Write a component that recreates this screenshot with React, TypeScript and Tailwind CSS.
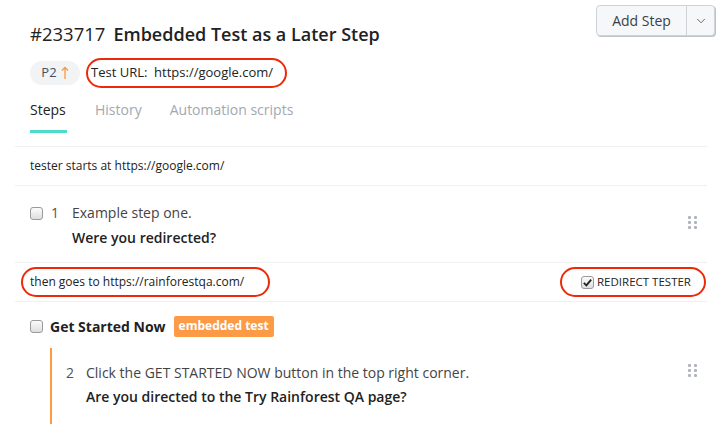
import React from 'react';
import { ChevronDown } from 'lucide-react';

const DragHandle: React.FC = () => (
  <div className="grid grid-cols-2 gap-x-[3px] gap-y-[2px]">
    {[0, 1, 2, 3, 4, 5].map(i => (
      <span key={i} className="w-[3px] h-[3px] bg-[#b0b4bd] rounded-[1px]" />
    ))}
  </div>
);

const Box: React.FC<{ checked?: boolean }> = ({ checked }) => (
  <span className="w-[13px] h-[13px] rounded-[3px] border border-[#9a9a9a] bg-gradient-to-b from-[#fbfbfb] to-[#dedede] flex items-center justify-center shrink-0">
    {checked && (
      <svg viewBox="0 0 12 12" className="w-[11px] h-[11px]">
        <path d="M2 6.5 L4.8 9.2 L10 2.8" stroke="#222" strokeWidth="2" fill="none" />
      </svg>
    )}
  </span>
);

export default function App() {
  return (
    <div className="w-[722px] h-[427px] bg-white relative overflow-hidden text-[#333] font-['Open_Sans',sans-serif]">
      {/* Add step */}
      <div className="absolute top-[5px] left-[596px] flex h-[31px] rounded-[4px] border border-[#cfd3d9] bg-[#f6f7f9] shadow-[1px_1px_0_#bfc3c9]">
        <div className="w-[89px] flex items-center justify-center text-[14px] text-[#3b3f47]">Add Step</div>
        <div className="w-[28px] border-l border-[#cfd3d9] flex items-center justify-center text-[#555]">
          <ChevronDown className="w-[14px] h-[14px]" strokeWidth={1.5} />
        </div>
      </div>

      <div className="pl-[30px] pt-[20px]">
        <h1 className="text-[18px] leading-[28px] text-[#222]">
          <span className="font-normal text-[18.5px]">#233717</span>
          <span className="font-semibold ml-[8px]">Embedded Test as a Later Step</span>
        </h1>
        <div className="flex items-center mt-[10px] h-[30px]">
          <span className="h-[24px] w-[50px] rounded-full bg-[#f2f3f5] flex items-center justify-center text-[13px] text-[#4a4f5a] gap-[4px]">
            P2
            <svg viewBox="0 0 8 14" className="w-[8px] h-[14px]">
              <path d="M4 13 V1.5 M1 4.5 L4 1.5 L7 4.5" stroke="#f79a3e" strokeWidth="1.3" fill="none" />
            </svg>
          </span>
          <span className="ml-[6px] h-[30px] w-[201px] border-2 border-[#ec2a0a] rounded-full flex items-center pl-[3px] text-[13px] text-[#222]">
            Test URL:&nbsp;&nbsp;https://google.com/
          </span>
        </div>
        <div className="flex mt-[10px] text-[14px] h-[37px]">
          <div className="flex flex-col">
            <span className="text-[#222] leading-[24px]">Steps</span>
            <span className="mt-[8px] h-[3px] w-[37px] bg-[#4fdacb]" />
          </div>
          <span className="ml-[28px] text-[#a3a7b1] leading-[24px]">History</span>
          <span className="ml-[28px] text-[#a3a7b1] leading-[24px]">Automation scripts</span>
        </div>
      </div>

      <div className="ml-[15px] mr-[15px] mt-[11px] border-t border-[#eef0f2]">
        <div className="h-[38px] flex items-center pl-[15px] text-[12px] text-[#222]">tester starts at https://google.com/</div>
        <div className="border-t border-[#eef0f2] h-[77px] flex items-start pl-[15px] pt-[17px]">
          <div className="mt-[4px]"><Box /></div>
          <span className="ml-[8px] text-[14px] text-[#555] leading-[20px]">1</span>
          <div className="ml-[13px]">
            <div className="text-[14px] text-[#444] leading-[20px]">Example step one.</div>
            <div className="text-[14px] text-[#222] font-semibold leading-[20px] mt-[5px]">Were you redirected?</div>
          </div>
          <div className="ml-auto mr-[10px] mt-[13px]"><DragHandle /></div>
        </div>
        <div className="border-t border-[#eef0f2] h-[39px] flex items-center">
          <span className="ml-[6px] h-[30px] w-[249px] border-2 border-[#ec2a0a] rounded-full flex items-center pl-[7px] text-[12px] text-[#222]">
            then goes to https://rainforestqa.com/
          </span>
          <span className="ml-auto mr-[1px] h-[30px] w-[146px] border-2 border-[#ec2a0a] rounded-full flex items-center pl-[19px] text-[11.5px] text-[#222] gap-[3px]">
            <Box checked /> REDIRECT TESTER
          </span>
        </div>
        <div className="border-t border-[#eef0f2] pl-[15px] pt-[13px]">
          <div className="flex items-center h-[22px]">
            <Box />
            <span className="ml-[7px] text-[14px] font-bold text-[#222]">Get Started Now</span>
            <span className="ml-[8px] h-[21px] px-[5px] rounded-[2px] bg-[#fd9a45] text-white font-bold text-[12px] flex items-center">embedded test</span>
          </div>
          <div className="ml-[20px] mt-[11px] border-l-2 border-[#fd9a45] h-[76px] flex items-start pt-[15px]">
            <span className="ml-[14px] text-[14px] text-[#555] leading-[20px]">2</span>
            <div className="ml-[12px]">
              <div className="text-[14px] text-[#444] leading-[20px]">Click the GET STARTED NOW button in the top right corner.</div>
              <div className="text-[14px] text-[#222] font-semibold leading-[20px] mt-[4px]">Are you directed to the Try Rainforest QA page?</div>
            </div>
            <div className="ml-auto mr-[10px] mt-[1px]"><DragHandle /></div>
          </div>
        </div>
      </div>
    </div>
  );
}
